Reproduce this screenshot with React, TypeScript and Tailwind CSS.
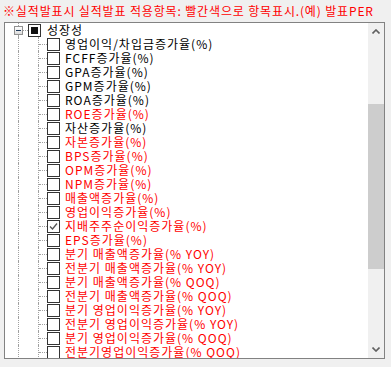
const items: { label: string; red?: boolean; checked?: boolean }[] = [
  { label: '영업이익/차입금증가율(%)' },
  { label: 'FCFF증가율(%)' },
  { label: 'GPA증가율(%)' },
  { label: 'GPM증가율(%)' },
  { label: 'ROA증가율(%)' },
  { label: 'ROE증가율(%)', red: true },
  { label: '자산증가율(%)' },
  { label: '자본증가율(%)', red: true },
  { label: 'BPS증가율(%)', red: true },
  { label: 'OPM증가율(%)', red: true },
  { label: 'NPM증가율(%)', red: true },
  { label: '매출액증가율(%)', red: true },
  { label: '영업이익증가율(%)', red: true },
  { label: '지배주주순이익증가율(%)', red: true, checked: true },
  { label: 'EPS증가율(%)', red: true },
  { label: '분기 매출액증가율(% YOY)', red: true },
  { label: '전분기 매출액증가율(% YOY)', red: true },
  { label: '분기 매출액증가율(% QOQ)', red: true },
  { label: '전분기 매출액증가율(% QOQ)', red: true },
  { label: '분기 영업이익증가율(% YOY)', red: true },
  { label: '전분기 영업이익증가율(% YOY)', red: true },
  { label: '분기 영업이익증가율(% QOQ)', red: true },
  { label: '전분기영업이익증가율(% QOQ)', red: true },
];

function CheckBox({ checked }: { checked?: boolean }) {
  return (
    <div className="w-[13px] h-[13px] shrink-0 border border-[#333333] bg-white">
      {checked && (
        <svg width="11" height="11" viewBox="0 0 11 11">
          <path d="M2 5.5 L4.5 8 L9 2.5" fill="none" stroke="#555555" strokeWidth="1.3" />
        </svg>
      )}
    </div>
  );
}

export default function App() {
  return (
    <div
      className="w-[391px] h-[367px] bg-[#f0f0f0] overflow-hidden text-[12px] tracking-[1px]"
      style={{ fontFamily: '"Noto Sans CJK KR", "Noto Sans", sans-serif' }}
    >
      {/* Title */}
      <div className="h-[22px] pl-[3px] leading-[22px] text-[#ff0000] whitespace-nowrap tracking-[0.85px]">
        ※실적발표시 실적발표 적용항목: 빨간색으로 항목표시.(예) 발표PER
      </div>

      {/* Tree box */}
      <div className="ml-[4px] w-[381px] h-[337px] border border-[#828282] bg-white flex overflow-hidden">
        <div className="flex-1 flex flex-col overflow-hidden">
          {/* Root row */}
          <div className="h-[14px] shrink-0 flex items-center">
            <div className="w-[9px] shrink-0" />
            <div className="w-[9px] h-full shrink-0 flex flex-col items-center">
              <div className="w-0 flex-1 border-l border-dotted border-[#a0a0a0]" />
              <div className="w-[9px] h-[9px] shrink-0 border border-[#919191] bg-gradient-to-b from-white to-[#dcdcdc] flex items-center justify-center">
                <div className="w-[5px] h-px bg-[#1e395b]" />
              </div>
              <div className="w-0 flex-1 border-l border-dotted border-[#a0a0a0]" />
            </div>
            <div className="w-[5px] border-t border-dotted border-[#a0a0a0] shrink-0" />
            <div className="w-[13px] h-[13px] shrink-0 border border-[#333333] bg-white flex items-center justify-center">
              <div className="w-[7px] h-[7px] bg-[#111111]" />
            </div>
            <span className="ml-[6px] leading-[14px] whitespace-nowrap text-black">성장성</span>
          </div>

          {/* Child rows */}
          {items.map((it) => (
            <div key={it.label} className="h-[14px] shrink-0 flex items-center">
              <div className="w-[13px] shrink-0" />
              <div className="w-[20px] h-full shrink-0 border-l border-dotted border-[#a0a0a0]" />
              <div className="w-[9px] h-full shrink-0 border-l border-dotted border-[#a0a0a0] flex items-center">
                <div className="w-[8px] border-t border-dotted border-[#a0a0a0]" />
              </div>
              <CheckBox checked={it.checked} />
              <span
                className={`ml-[5px] leading-[14px] whitespace-nowrap ${it.red ? 'text-[#ff0000]' : 'text-black'}`}
              >
                {it.label}
              </span>
            </div>
          ))}
        </div>

        {/* Scrollbar */}
        <div className="w-[16px] shrink-0 bg-[#f0f0f0] flex flex-col">
          <div className="h-[17px] shrink-0 flex items-center justify-center">
            <svg width="8" height="5" viewBox="0 0 8 5">
              <path d="M0.5 4.5 L4 1 L7.5 4.5" fill="none" stroke="#606060" strokeWidth="1.6" />
            </svg>
          </div>
          <div className="h-[64px] shrink-0" />
          <div className="h-[165px] shrink-0 bg-[#cdcdcd]" />
          <div className="flex-1" />
          <div className="h-[17px] shrink-0 flex items-center justify-center">
            <svg width="8" height="5" viewBox="0 0 8 5">
              <path d="M0.5 0.5 L4 4 L7.5 0.5" fill="none" stroke="#606060" strokeWidth="1.6" />
            </svg>
          </div>
        </div>
      </div>
    </div>
  );
}
